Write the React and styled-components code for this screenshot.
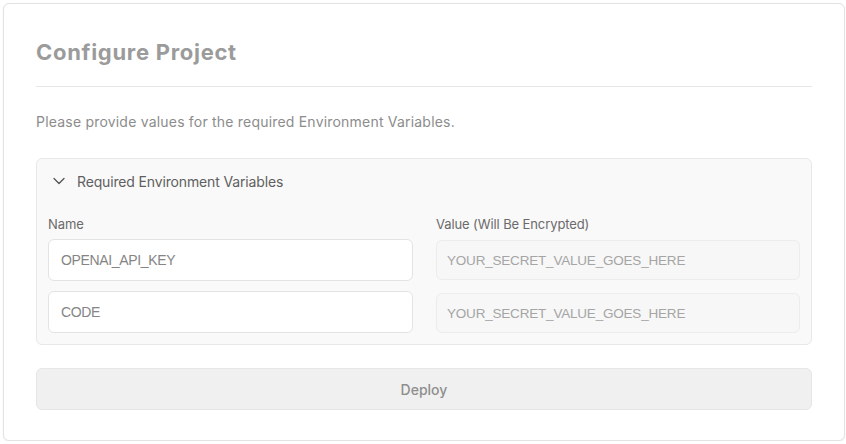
import React from "react";
import styled, { createGlobalStyle } from "styled-components";

const GlobalStyle = createGlobalStyle`
  body {
    margin: 0;
    background: #ffffff;
    font-family: Inter, "Liberation Sans", sans-serif;
  }
`;

const Card = styled.div`
  margin: 3px 1px 0 3px;
  width: 842px;
  height: 438px;
  box-sizing: border-box;
  border: 1px solid #e2e2e2;
  border-radius: 6px;
  box-shadow: 0 1px 2px rgba(0, 0, 0, 0.06);
  padding: 33px 32px 0 32px;
  background: #fff;
`;

const Title = styled.h1`
  margin: 0;
  font-size: 22px;
  line-height: 30px;
  font-weight: 700;
  color: #9b9b9b;
  letter-spacing: 0.7px;
`;

const Divider = styled.hr`
  margin: 19px 0 0 0;
  border: none;
  border-top: 1px solid #e6e6e6;
`;

const Description = styled.p`
  margin: 25px 0 0 0;
  font-size: 14px;
  line-height: 20px;
  letter-spacing: 0.2px;
  color: #8c8c8c;
`;

const Panel = styled.div`
  margin-top: 26px;
  border: 1px solid #e8e8e8;
  border-radius: 6px;
  background: #f9f9f9;
  padding: 0 11px 11px 11px;
`;

const PanelHeader = styled.div`
  display: flex;
  align-items: center;
  gap: 12px;
  height: 44px;
  padding-left: 5px;
  font-size: 14px;
  letter-spacing: -0.15px;
  color: #5f5f5f;
`;

const Columns = styled.div`
  display: grid;
  grid-template-columns: 365px 1fr;
  column-gap: 23px;
  margin-top: 13px;
`;

const Column = styled.div`
  display: flex;
  flex-direction: column;
`;

const Label = styled.div`
  font-size: 13px;
  line-height: 16px;
  letter-spacing: -0.1px;
  color: #6a6a6a;
  margin-bottom: 7px;
`;

const Input = styled.div`
  box-sizing: border-box;
  height: ${(p) => (p.$muted ? 40 : 42)}px;
  margin-top: ${(p) => (p.$muted ? 1 : 0)}px;
  margin-bottom: ${(p) => (p.$muted ? 12 : 10)}px;
  border: 1px solid ${(p) => (p.$muted ? "#ececec" : "#e3e3e3")};
  border-radius: 6px;
  background: ${(p) => (p.$muted ? "#f7f7f7" : "#ffffff")};
  display: flex;
  align-items: center;
  padding-left: ${(p) => (p.$muted ? 10 : 12)}px;
  font-family: "Liberation Sans", Arial, sans-serif;
  font-size: ${(p) => (p.$muted ? 13.5 : 14)}px;
  letter-spacing: ${(p) => (p.$muted ? -0.2 : -0.35)}px;
  color: ${(p) => (p.$muted ? "#a5a5a5" : "#858585")};
  &:last-child {
    margin-bottom: 0;
  }
`;

const DeployButton = styled.button`
  display: block;
  width: 100%;
  height: 42px;
  margin-top: 23px;
  border: 1px solid #e6e6e6;
  border-radius: 6px;
  background: #f0f0f0;
  font-family: Inter, "Liberation Sans", sans-serif;
  font-size: 14px;
  font-weight: 500;
  color: #8e8e8e;
`;

const Chevron = () => (
  <svg width="12" height="8" viewBox="0 0 12 8" fill="none" stroke="#555" strokeWidth="1.3" strokeLinecap="round" strokeLinejoin="round">
    <path d="M1 1.5l5 5 5-5" />
  </svg>
);

export default function App() {
  return (
    <>
      <GlobalStyle />
      <Card>
        <Title>Configure Project</Title>
        <Divider />
        <Description>Please provide values for the required Environment Variables.</Description>
        <Panel>
          <PanelHeader>
            <Chevron />
            Required Environment Variables
          </PanelHeader>
          <Columns>
            <Column>
              <Label>Name</Label>
              <Input>OPENAI_API_KEY</Input>
              <Input>CODE</Input>
            </Column>
            <Column>
              <Label>Value (Will Be Encrypted)</Label>
              <Input $muted>YOUR_SECRET_VALUE_GOES_HERE</Input>
              <Input $muted>YOUR_SECRET_VALUE_GOES_HERE</Input>
            </Column>
          </Columns>
        </Panel>
        <DeployButton>Deploy</DeployButton>
      </Card>
    </>
  );
}
